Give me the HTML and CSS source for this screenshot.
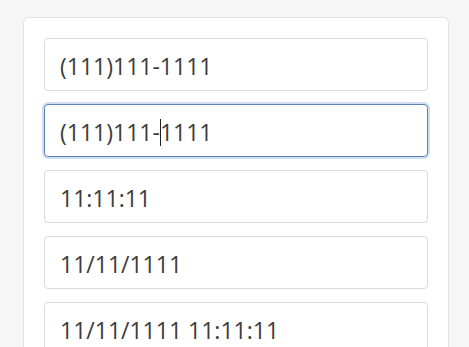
FILE: index.html
```html
<!DOCTYPE html>
<html>
<head>
<meta charset="utf-8">
<link rel="stylesheet" href="styles.css">
</head>
<body>
<div class="card">
  <div class="field">(111)111-1111</div>
  <div class="field focused">(111)111-<span class="caret"></span>1111</div>
  <div class="field">11:11:11</div>
  <div class="field">11/11/1111</div>
  <div class="field">11/11/1111 11:11:11</div>
</div>
</body>
</html>
```
FILE: styles.css
```css
html, body {
  margin: 0;
  padding: 0;
  background: #f6f6f6;
  height: 100%;
  overflow: hidden;
}
.card {
  margin: 17px 0 0 23px;
  width: 384px;
  padding: 20px;
  background: #fff;
  border: 1px solid #e3e3e3;
  border-radius: 6px;
  display: flex;
  flex-direction: column;
  gap: 13px;
}
.field {
  box-sizing: border-box;
  height: 53px;
  border: 1px solid #dadada;
  border-radius: 4px;
  padding: 4px 15px 0;
  font-family: "Open Sans", sans-serif;
  font-size: 23px;
  line-height: 47px;
  color: #3c3c3c;
  white-space: nowrap;
  background: #fff;
}
.focused {
  border-color: #5d82b0;
  box-shadow: 0 0 0 2px #cfe0f5;
}
.caret {
  display: inline-block;
  width: 1px;
  height: 27px;
  background: #222;
  vertical-align: -5px;
  margin: 0 -1px 0 0;
}
```
